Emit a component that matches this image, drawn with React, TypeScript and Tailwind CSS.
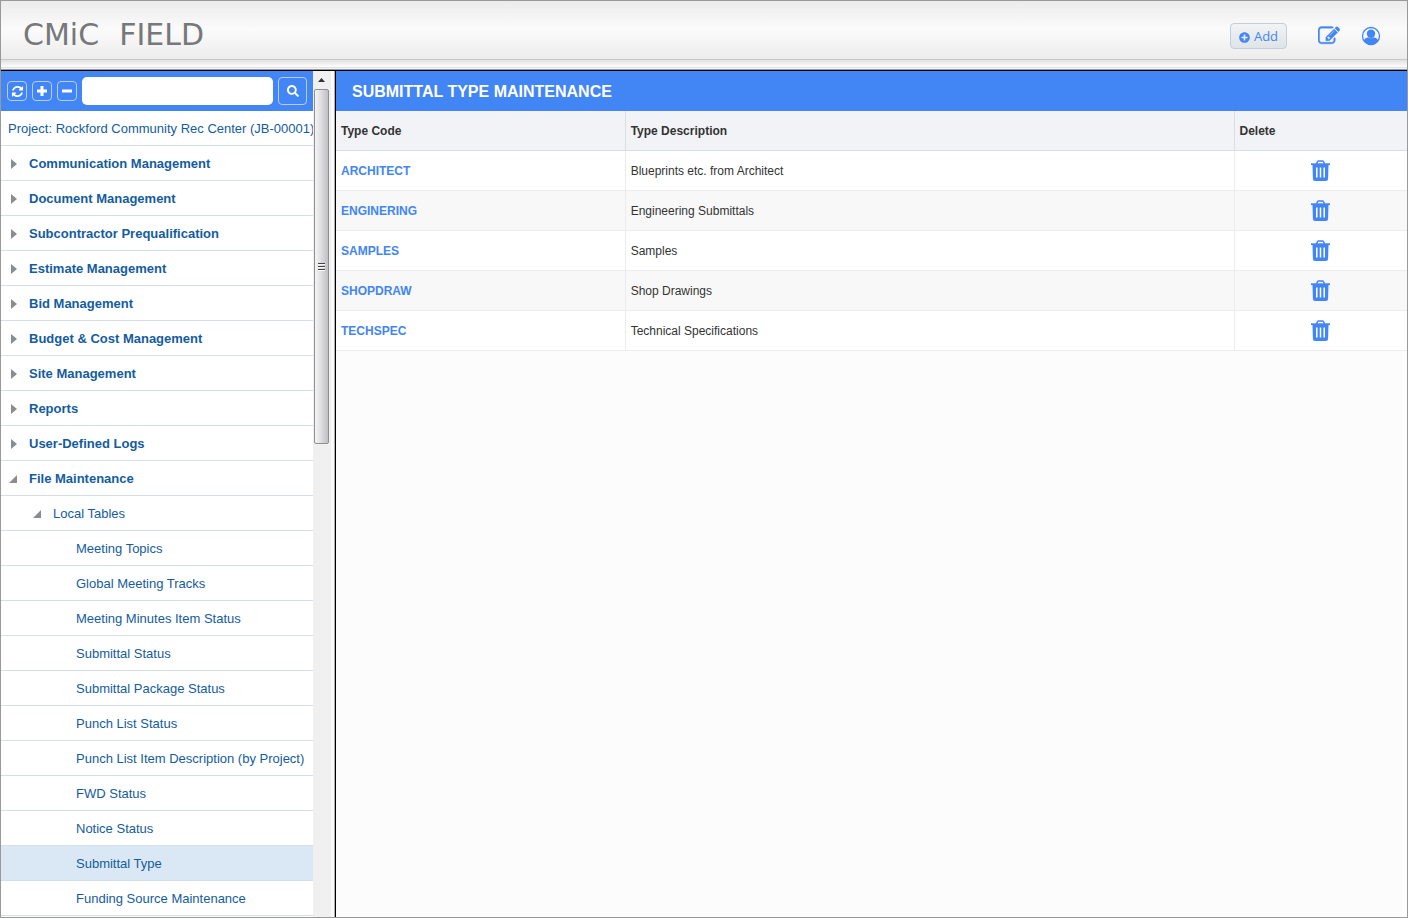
import { useState } from "react";
import { FaPlusCircle, FaSearch } from "react-icons/fa";

type NavItem = {
  label: string;
  level: 0 | 1 | 2;
  state?: "closed" | "open";
};

const navItems: NavItem[] = [
  { label: "Communication Management", level: 0, state: "closed" },
  { label: "Document Management", level: 0, state: "closed" },
  { label: "Subcontractor Prequalification", level: 0, state: "closed" },
  { label: "Estimate Management", level: 0, state: "closed" },
  { label: "Bid Management", level: 0, state: "closed" },
  { label: "Budget & Cost Management", level: 0, state: "closed" },
  { label: "Site Management", level: 0, state: "closed" },
  { label: "Reports", level: 0, state: "closed" },
  { label: "User-Defined Logs", level: 0, state: "closed" },
  { label: "File Maintenance", level: 0, state: "open" },
  { label: "Local Tables", level: 1, state: "open" },
  { label: "Meeting Topics", level: 2 },
  { label: "Global Meeting Tracks", level: 2 },
  { label: "Meeting Minutes Item Status", level: 2 },
  { label: "Submittal Status", level: 2 },
  { label: "Submittal Package Status", level: 2 },
  { label: "Punch List Status", level: 2 },
  { label: "Punch List Item Description (by Project)", level: 2 },
  { label: "FWD Status", level: 2 },
  { label: "Notice Status", level: 2 },
  { label: "Submittal Type", level: 2 },
  { label: "Funding Source Maintenance", level: 2 },
];

const submittalTypes = [
  { code: "ARCHITECT", description: "Blueprints etc. from Architect" },
  { code: "ENGINERING", description: "Engineering Submittals" },
  { code: "SAMPLES", description: "Samples" },
  { code: "SHOPDRAW", description: "Shop Drawings" },
  { code: "TECHSPEC", description: "Technical Specifications" },
];

const levelClasses = {
  0: "pl-2 font-bold",
  1: "pl-8",
  2: "pl-[75px]",
};

function TrashIcon() {
  return (
    <svg width="19" height="22" viewBox="0 0 19 22" fill="none">
      <path
        d="M5.500 4l1-2.200q.3-.8 1.200-.8h3.600q.9 0 1.200.8l1 2.200"
        stroke="#4285f4"
        strokeWidth="1.600"
      />
      <path d="M0 4.200h19" stroke="#4285f4" strokeWidth="1.800" />
      <path d="M1.500 4.500h16l-.4 14.200a2.300 2.300 0 0 1-2.300 2.300h-10.600a2.300 2.300 0 0 1-2.300-2.300z" fill="#4285f4" />
      <path d="M5.800 7.500v10M9.500 7.500v10M13.200 7.500v10" stroke="#fff" strokeWidth="1.500" />
    </svg>
  );
}

function UserIcon() {
  return (
    <svg width="20" height="20" viewBox="0 0 20 20" fill="#4285f4">
      <circle cx="10" cy="10" r="8.500" fill="none" stroke="#4285f4" strokeWidth="1.300" />
      <circle cx="10" cy="7.700" r="4.200" />
      <path d="M2.800 14.500c.8-2 2.700-2.800 4.400-3.200 1.600 1.300 4 1.300 5.600 0 1.700.4 3.600 1.200 4.400 3.200-1.500 2.600-4.200 4.300-7.200 4.300s-5.700-1.700-7.200-4.300z" />
    </svg>
  );
}

function EditIcon() {
  return (
    <svg width="22" height="22" viewBox="0 0 1792 1792" fill="#4285f4" stroke="#4285f4" strokeWidth="30">
      <path d="M888 1184l116-116-152-152-116 116v56h96v96h56zm440-720q-16-16-33 1l-350 350q-17 17-1 33t33-1l350-350q17-17 1-33zm80 594v190q0 119-84.500 203.500t-203.500 84.500h-832q-119 0-203.500-84.500t-84.500-203.500v-832q0-119 84.500-203.500t203.500-84.500h832q63 0 117 25 15 7 18 23 3 17-9 29l-49 49q-14 14-32 8-23-6-45-6h-832q-66 0-113 47t-47 113v832q0 66 47 113t113 47h832q66 0 113-47t47-113v-126q0-13 9-22l64-64q15-15 35-7t20 29zm-96-738l288 288-672 672h-288v-288zm444 132l-92 92-288-288 92-92q28-28 68-28t68 28l152 152q28 28 28 68t-28 68z" />
    </svg>
  );
}

function RefreshIcon() {
  return (
    <svg width="13" height="13" viewBox="0 0 1792 1792" fill="currentColor">
      <path d="M1639 1056q0 5-1 7-64 268-268 434.500t-478 166.500q-146 0-282.500-55t-243.500-157l-129 129q-19 19-45 19t-45-19-19-45v-448q0-26 19-45t45-19h448q26 0 45 19t19 45-19 45l-137 137q71 66 161 102t187 36q134 0 250-65t186-179q11-17 53-117 8-23 30-23h192q13 0 22.500 9.500t9.500 22.500zm25-800v448q0 26-19 45t-45 19h-448q-26 0-45-19t-19-45 19-45l138-138q-148-137-349-137-134 0-250 65t-186 179q-11 17-53 117-8 23-30 23h-199q-13 0-22.500-9.500t-9.500-22.500v-7q65-268 270-434.500t480-166.500q146 0 284 55.500t245 156.500l130-129q19-19 45-19t45 19 19 45z" />
    </svg>
  );
}

function PlusIcon() {
  return (
    <svg width="10" height="10" viewBox="0 0 10 10" stroke="currentColor" strokeWidth="3">
      <path d="M5 0v10M0 5h10" />
    </svg>
  );
}

function MinusIcon() {
  return (
    <svg width="10" height="10" viewBox="0 0 10 10" stroke="currentColor" strokeWidth="3">
      <path d="M0 5h10" />
    </svg>
  );
}

function Arrow({ state }: { state: "closed" | "open" }) {
  return (
    <svg width="8" height="10" viewBox="0 0 8 10" fill="#8a8d90">
      {state === "closed" ? <path d="M2 0v10l6-5z" /> : <path d="M8 1v8H0z" />}
    </svg>
  );
}

function Header() {
  return (
    <header className="shrink-0 border-b border-[#999]">
      <div className="flex h-[59px] items-center justify-between border-b border-[#c8c8c8] bg-linear-to-b from-[#ececec] via-[#fbfbfb] to-[#ececec] pr-[26px] pl-[22px]">
        <h1 className="flex gap-5 pt-2 font-['DejaVu_Sans',sans-serif] text-[30px] font-normal text-[#77787b]">
          <span>CMiC</span>
          <span>FIELD</span>
        </h1>
        <div className="flex items-center pt-3">
          <button className="flex h-[26px] w-[57px] items-center justify-center gap-1 rounded border border-[#c3ced9] bg-linear-to-b from-[#f2f3f4] to-[#dfe4e8] pt-0.5 font-['Open_Sans',sans-serif] text-[13px] text-[#4285f4]">
            <FaPlusCircle size={11} />
            Add
          </button>
          <button aria-label="Edit" className="ml-[31px]">
            <EditIcon />
          </button>
          <button aria-label="Account" className="ml-[21px]">
            <UserIcon />
          </button>
        </div>
      </div>
      <div className="h-2 border-b border-[#e2e2e2] bg-linear-to-b from-[#e0e0e0] to-white" />
      <div className="h-px bg-[#f4f4f4]" />
    </header>
  );
}

const toolButton =
  "flex size-5 shrink-0 items-center justify-center rounded border border-[#b9cdf0] text-white";

function Sidebar() {
  const [search, setSearch] = useState("");
  const [selected, setSelected] = useState("Submittal Type");

  return (
    <aside className="flex w-[312px] shrink-0 flex-col overflow-hidden bg-white text-[13px] text-[#145c9e]">
      <div className="flex h-10 shrink-0 items-center gap-[5px] bg-[#4285f4] px-[6px]">
        <button aria-label="Refresh" className={toolButton}>
          <RefreshIcon />
        </button>
        <button aria-label="Expand all" className={toolButton}>
          <PlusIcon />
        </button>
        <button aria-label="Collapse all" className={toolButton}>
          <MinusIcon />
        </button>
        <input
          type="text"
          aria-label="Search menu"
          value={search}
          onChange={(e) => setSearch(e.target.value)}
          className="h-7 min-w-0 flex-1 rounded-[5px] bg-white px-2 outline-none"
        />
        <button
          aria-label="Search"
          className="flex h-7 w-[29px] shrink-0 items-center justify-center rounded border border-[#b9cdf0] text-white"
        >
          <FaSearch size={12} />
        </button>
      </div>
      <div className="flex h-[35px] shrink-0 items-center border-b border-[#d6dfe6] pt-0.5 pl-[7px] whitespace-nowrap">
        Project: Rockford Community Rec Center (JB-00001)
      </div>
      <nav>
        {navItems.map((item) => (
          <a
            key={item.label}
            href="#"
            onClick={() => setSelected(item.label)}
            className={`flex h-[35px] items-center gap-3 border-b border-[#d6dfe6] pt-0.5 whitespace-nowrap ${levelClasses[item.level]} ${
              item.label === selected ? "bg-[#dae8f5]" : ""
            }`}
          >
            {item.state && <Arrow state={item.state} />}
            {item.label}
          </a>
        ))}
      </nav>
    </aside>
  );
}

function Splitter() {
  return (
    <div className="flex shrink-0 border-r border-black bg-[#f0f0f0] pl-px">
      <div className="flex w-[15px] flex-col">
        <div className="flex h-[18px] items-center justify-center">
          <svg width="7" height="4" viewBox="0 0 7 4" fill="#333">
            <path d="M3.500 0L7 4H0z" />
          </svg>
        </div>
        <div className="flex h-[42%] flex-col items-center justify-center gap-px rounded-xs border border-[#8f8f8f] bg-linear-to-r from-[#f5f5f5] via-[#dcdcde] to-[#c0c0c4]">
          <span className="h-0.5 w-[7px] border-b border-[#fafafa] bg-[#444]" />
          <span className="h-0.5 w-[7px] border-b border-[#fafafa] bg-[#444]" />
          <span className="h-0.5 w-[7px] border-b border-[#fafafa] bg-[#444]" />
        </div>
      </div>
      <div className="ml-0.5 w-1 border-r border-[#b0b0b0] bg-[#fafafa]" />
    </div>
  );
}

function SubmittalTable() {
  return (
    <table className="w-full table-fixed border-collapse text-left text-xs text-[#333]">
      <colgroup>
        <col className="w-[27%]" />
        <col />
        <col className="w-[173px]" />
      </colgroup>
      <thead>
        <tr className="h-[39px] border-b border-[#d6dfe6] bg-[#f1f3f7]">
          <th className="border-r border-[#d6dfe6] px-[5px] pt-0.5">Type Code</th>
          <th className="border-r border-[#d6dfe6] px-[5px] pt-0.5">Type Description</th>
          <th className="px-[5px] pt-0.5">Delete</th>
        </tr>
      </thead>
      <tbody>
        {submittalTypes.map((row) => (
          <tr key={row.code} className="h-10 border-b border-[#ececec] bg-white even:bg-[#f8f8f8]">
            <td className="border-r border-[#ececec] px-[5px] pt-0.5">
              <a href="#" className="font-bold text-[#4285f4]">
                {row.code}
              </a>
            </td>
            <td className="border-r border-[#ececec] px-[5px] pt-0.5">{row.description}</td>
            <td className="pt-0.5">
              <button aria-label={`Delete ${row.code}`} className="mx-auto block">
                <TrashIcon />
              </button>
            </td>
          </tr>
        ))}
      </tbody>
    </table>
  );
}

export default function App() {
  return (
    <div className="flex h-screen flex-col overflow-hidden border border-[#999] bg-white font-['Liberation_Sans',Arial,sans-serif]">
      <Header />
      <div className="flex min-h-0 flex-1 border-t border-black">
        <Sidebar />
        <Splitter />
        <main className="min-w-0 flex-1 bg-[#fcfcfc]">
          <h2 className="flex h-10 items-center bg-[#4285f4] px-4 pt-0.5 text-base font-bold text-white">
            SUBMITTAL TYPE MAINTENANCE
          </h2>
          <SubmittalTable />
        </main>
      </div>
    </div>
  );
}
